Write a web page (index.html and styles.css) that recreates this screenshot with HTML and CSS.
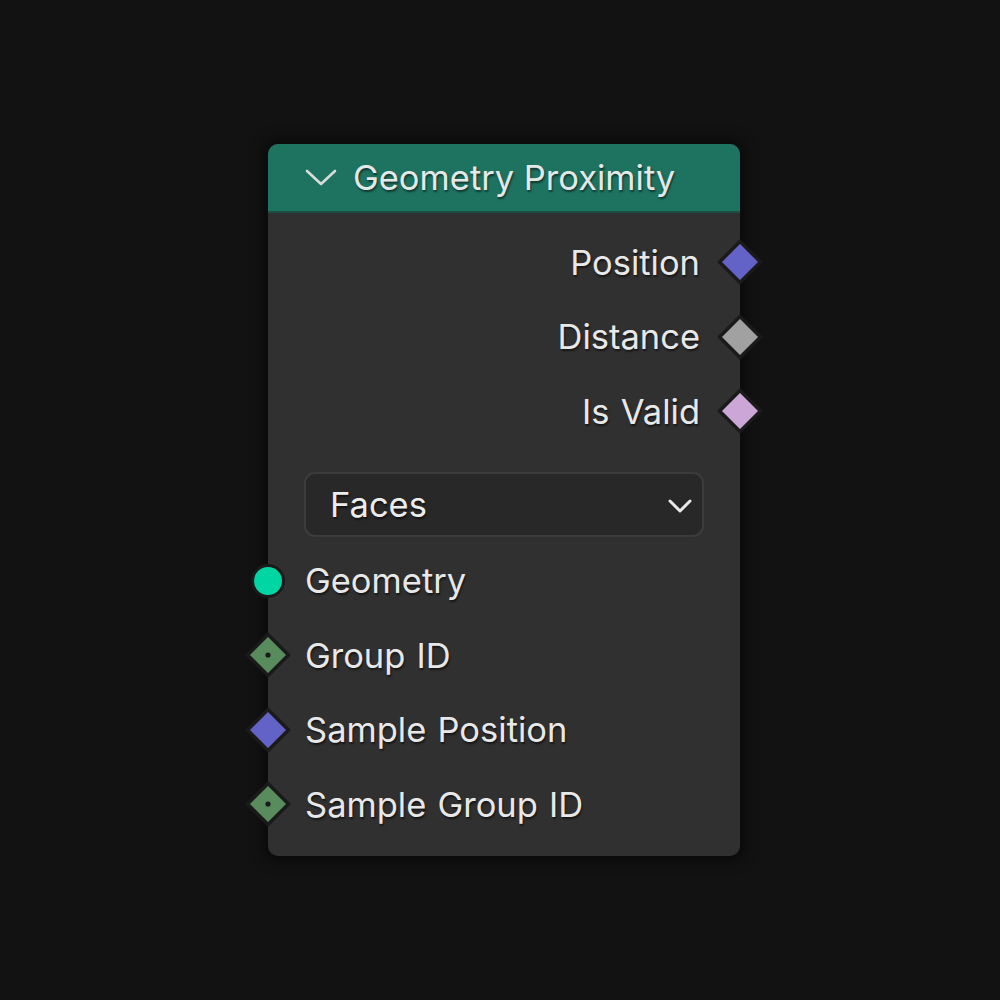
FILE: index.html
```html
<!DOCTYPE html>
<html>
<head>
<meta charset="utf-8">
<link rel="stylesheet" href="styles.css">
</head>
<body>
<div class="canvas">
  <div class="node">
    <div class="header">
      <svg class="hchev" width="32" height="18" viewBox="0 0 32 18"><path d="M2 2 L16 15 L30 2" fill="none" stroke="#d8dcd9" stroke-width="2.6" stroke-linecap="round" stroke-linejoin="round"/></svg>
      <span class="title">Geometry Proximity</span>
    </div>
    <div class="body">
      <div class="row out">
        <span class="label">Position</span>
        <svg class="sock sock-r" width="46" height="46" viewBox="0 0 46 46"><path d="M23 2.5 L43.5 23 L23 43.5 L2.5 23 Z" fill="#6363c7" stroke="#1a1a1a" stroke-width="3.5"/></svg>
      </div>
      <div class="row out">
        <span class="label">Distance</span>
        <svg class="sock sock-r" width="46" height="46" viewBox="0 0 46 46"><path d="M23 2.5 L43.5 23 L23 43.5 L2.5 23 Z" fill="#a1a1a1" stroke="#1a1a1a" stroke-width="3.5"/></svg>
      </div>
      <div class="row out">
        <span class="label">Is Valid</span>
        <svg class="sock sock-r" width="46" height="46" viewBox="0 0 46 46"><path d="M23 2.5 L43.5 23 L23 43.5 L2.5 23 Z" fill="#cca6d6" stroke="#1a1a1a" stroke-width="3.5"/></svg>
      </div>
      <div class="select-wrap">
        <div class="select">
          <span class="select-text">Faces</span>
          <svg class="schev" width="26" height="16" viewBox="0 0 26 16"><path d="M3 3 L13 13 L23 3" fill="none" stroke="#e8e8e8" stroke-width="3" stroke-linecap="round" stroke-linejoin="round"/></svg>
        </div>
      </div>
      <div class="row in">
        <svg class="sock sock-l" width="46" height="46" viewBox="0 0 46 46"><circle cx="23" cy="23" r="15.5" fill="#00d6a3" stroke="#1a1a1a" stroke-width="3"/></svg>
        <span class="label">Geometry</span>
      </div>
      <div class="row in">
        <svg class="sock sock-l" width="46" height="46" viewBox="0 0 46 46"><path d="M23 2.5 L43.5 23 L23 43.5 L2.5 23 Z" fill="#598c5c" stroke="#1a1a1a" stroke-width="3.5"/><circle cx="23" cy="23" r="2.6" fill="#1a1a1a"/></svg>
        <span class="label">Group ID</span>
      </div>
      <div class="row in">
        <svg class="sock sock-l" width="46" height="46" viewBox="0 0 46 46"><path d="M23 2.5 L43.5 23 L23 43.5 L2.5 23 Z" fill="#6363c7" stroke="#1a1a1a" stroke-width="3.5"/></svg>
        <span class="label">Sample Position</span>
      </div>
      <div class="row in">
        <svg class="sock sock-l" width="46" height="46" viewBox="0 0 46 46"><path d="M23 2.5 L43.5 23 L23 43.5 L2.5 23 Z" fill="#598c5c" stroke="#1a1a1a" stroke-width="3.5"/><circle cx="23" cy="23" r="2.6" fill="#1a1a1a"/></svg>
        <span class="label">Sample Group ID</span>
      </div>
    </div>
  </div>
</div>
</body>
</html>
```

FILE: styles.css
```css
html, body {
  margin: 0;
  padding: 0;
  background: #121212;
}
body {
  width: 1000px;
  height: 1000px;
  overflow: hidden;
  font-family: Inter, "Noto Sans", "DejaVu Sans", sans-serif;
}
.canvas {
  padding-top: 144px;
  padding-left: 268px;
}
.node {
  width: 472px;
  border-radius: 10px;
  background: #303030;
  box-shadow: 0 0 14px 5px rgba(0, 0, 0, 0.5);
}
.header {
  height: 67px;
  background: #1e7260;
  border-bottom: 2px solid #1a4f42;
  border-radius: 10px 10px 0 0;
  display: flex;
  align-items: center;
  padding-left: 37px;
  box-sizing: content-box;
}
.hchev {
  display: block;
  margin-top: 1px;
  margin-right: 16px;
}
.title {
  color: #e4e8e6;
  font-size: 34.5px;
  text-shadow: 1px 2px 2px rgba(0, 0, 0, 0.5);
}
.body {
  padding-top: 12px;
  padding-bottom: 14px;
}
.row {
  position: relative;
  height: 74.5px;
  display: flex;
  align-items: center;
}
.row.out {
  justify-content: flex-end;
  padding-right: 40px;
}
.row.in {
  padding-left: 37px;
}
.label {
  color: #e8e8e8;
  font-size: 34.5px;
  word-spacing: 1.5px;
  text-shadow: 1px 2px 2px rgba(0, 0, 0, 0.55);
}
.sock {
  position: absolute;
  top: 50%;
  margin-top: -23px;
}
.sock-r {
  right: -23px;
}
.sock-l {
  left: -23px;
}
.select-wrap {
  padding: 23.5px 36px 6.5px 36px;
}
.select {
  height: 61px;
  border: 2px solid #3c3c3c;
  border-radius: 11px;
  background: #282828;
  display: flex;
  align-items: center;
  justify-content: space-between;
  padding-left: 24px;
  padding-right: 9px;
}
.select-text {
  color: #ececec;
  font-size: 34.5px;
  text-shadow: 1px 2px 2px rgba(0, 0, 0, 0.55);
}
.schev {
  display: block;
  margin-top: 3px;
}
```
